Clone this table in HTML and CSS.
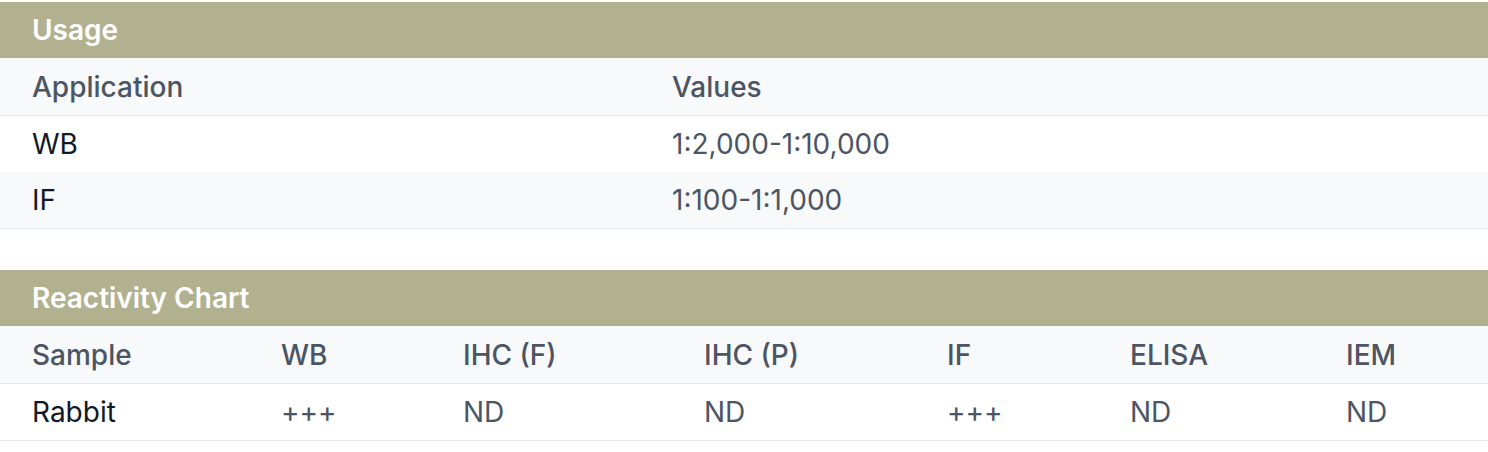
FILE: index.html
```html
<!DOCTYPE html>
<html lang="en">
<head>
<meta charset="utf-8">
<title>Usage</title>
<link rel="stylesheet" href="styles.css">
</head>
<body>
<section class="block">
  <h2 class="block-title">Usage</h2>
  <table class="tbl usage">
    <colgroup><col class="u1"><col class="u2"></colgroup>
    <thead>
      <tr><th>Application</th><th>Values</th></tr>
    </thead>
    <tbody>
      <tr><td class="key">WB</td><td>1:2,000-1:10,000</td></tr>
      <tr class="alt"><td class="key">IF</td><td>1:100-1:1,000</td></tr>
    </tbody>
  </table>
</section>
<section class="block gap">
  <h2 class="block-title">Reactivity Chart</h2>
  <table class="tbl react">
    <colgroup>
      <col class="r1"><col class="r2"><col class="r3"><col class="r4"><col class="r5"><col class="r6"><col class="r7">
    </colgroup>
    <thead>
      <tr><th>Sample</th><th>WB</th><th>IHC (F)</th><th>IHC (P)</th><th>IF</th><th>ELISA</th><th>IEM</th></tr>
    </thead>
    <tbody>
      <tr><td class="key">Rabbit</td><td>+++</td><td>ND</td><td>ND</td><td>+++</td><td>ND</td><td>ND</td></tr>
    </tbody>
  </table>
</section>
</body>
</html>
```
FILE: styles.css
```css
html, body {
  margin: 0;
  padding: 0;
  background: #ffffff;
}
body {
  padding-top: 2px;
  font-family: Inter, "Liberation Sans", sans-serif;
}
.block {
  width: 1488px;
}
.gap {
  margin-top: 41px;
}
.block-title {
  margin: 0;
  height: 56px;
  line-height: 56px;
  padding-left: 32px;
  background: #b1b18f;
  color: #ffffff;
  font-size: 28px;
  font-weight: 600;
}
.tbl {
  width: 100%;
  border-collapse: collapse;
  table-layout: fixed;
  font-size: 28px;
  line-height: 34px;
}
.tbl th,
.tbl td {
  text-align: left;
  padding: 0 0 0 32px;
  height: 56px;
  vertical-align: middle;
  white-space: nowrap;
  color: #4b5563;
}
.tbl thead th {
  height: 57px;
  background: #f8f9fb;
  font-weight: 500;
  border-bottom: 1px solid #e5e7eb;
}
.tbl td {
  font-weight: 400;
}
.tbl td.key {
  color: #111827;
}
.tbl tr.alt td {
  background: #f8f9fb;
}
.tbl tbody tr:last-child td {
  border-bottom: 1px solid #e5e7eb;
}
.u1 { width: 640px; }
.r1 { width: 249px; }
.r2 { width: 182px; }
.r3 { width: 241px; }
.r4 { width: 243px; }
.r5 { width: 183px; }
.r6 { width: 216px; }
.r7 { width: 174px; }
```
